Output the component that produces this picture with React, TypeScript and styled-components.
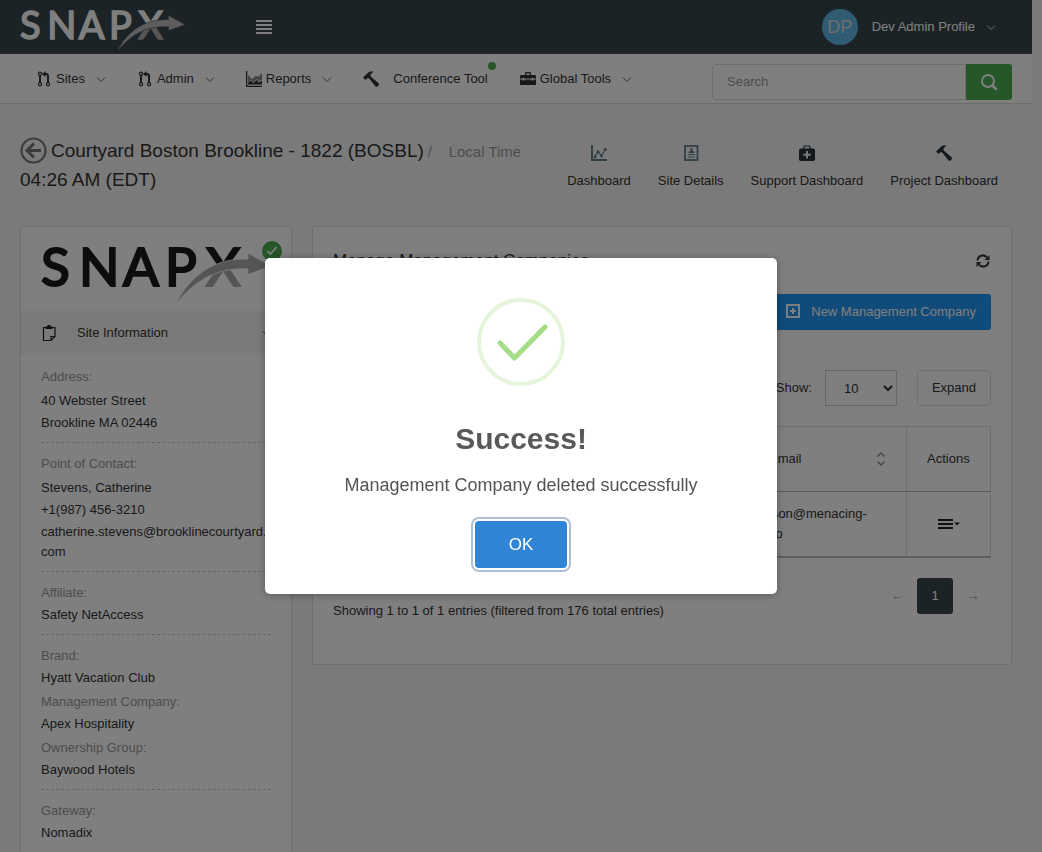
import React, { useId } from 'react';
import styled, { createGlobalStyle } from 'styled-components';

const GlobalStyle = createGlobalStyle`
  * { box-sizing: border-box; }
  body {
    margin: 0;
    overflow: hidden;
    background: #f5f5f5;
    color: #333;
    font: 13px/20px "Liberation Sans", Arial, sans-serif;
  }
  button, input, select { font: inherit; color: inherit; }
  a { color: inherit; text-decoration: none; }
  svg { display: block; flex: none; overflow: visible; }
`;

const Page = styled.div`
  height: 100vh;
  overflow: hidden;
  padding-right: 10px;
`;

const TopBar = styled.header`
  display: flex;
  align-items: center;
  height: 54px;
  padding: 0 33px 0 20px;
  background: #37474f;
  border-bottom: 1px solid #42535b;
  color: #fff;
`;

const Brand = styled.a`
  display: block;
  width: 165px;
  margin-top: 10px;
`;

const PlainButton = styled.button`
  display: flex;
  align-items: center;
  padding: 0;
  border: 0;
  background: none;
  cursor: pointer;
`;

const MenuToggle = styled(PlainButton)`
  margin-left: 71px;
`;

const Profile = styled(PlainButton)`
  gap: 8px;
  margin-left: auto;
`;

const Avatar = styled.span`
  width: 36px;
  height: 36px;
  margin-right: 6px;
  border-radius: 50%;
  background: #5eb8e4;
  color: #ddd;
  font-size: 18px;
  line-height: 37px;
  text-align: center;
`;

const NavBar = styled.nav`
  display: flex;
  align-items: center;
  height: 50px;
  padding: 0 20px 0 36px;
  background: #fff;
  border-bottom: 1px solid #ddd;
`;

const NavList = styled.ul`
  display: flex;
  gap: 28px;
  margin: 0;
  padding: 0;
  list-style: none;
`;

const NavLink = styled.a<{ $wide?: boolean }>`
  position: relative;
  display: flex;
  align-items: center;
  gap: ${p => (p.$wide ? 14 : 4)}px;
  padding-right: ${p => (p.$wide ? 4 : 0)}px;
  > span + svg { margin-left: 4px; }
`;

const StatusDot = styled.i`
  position: absolute;
  top: -7px;
  right: -4px;
  width: 8px;
  height: 8px;
  border-radius: 50%;
  background: #4caf50;
`;

const SearchForm = styled.form`
  display: flex;
  width: 300px;
  height: 36px;
  margin: 7px 0 0 auto;
`;

const SearchInput = styled.input`
  flex: 1;
  min-width: 0;
  padding: 0 14px;
  border: 1px solid #ddd;
  border-radius: 3px 0 0 3px;
  background: #fff;
  &::placeholder { color: #999; }
`;

const SearchButton = styled.button`
  display: grid;
  place-items: center;
  width: 46px;
  padding: 0;
  border: 0;
  border-radius: 0 3px 3px 0;
  background: #4caf50;
`;

const PageHeader = styled.div`
  display: flex;
  align-items: flex-start;
  gap: 28px;
  padding: 32px 34px 32px 20px;
`;

const Title = styled.h1`
  flex: 1;
  margin: 0;
  font-size: 19px;
  font-weight: 400;
  line-height: 29px;
  a { display: inline-block; margin-right: 4px; vertical-align: -7px; }
  small { margin: 0 4px; color: #999; font-size: 15px; line-height: 20px; white-space: pre; }
`;

const QuickLinks = styled.div`
  display: flex;
  gap: 27px;
  padding-top: 9px;
`;

const QuickLink = styled.a`
  display: flex;
  flex-direction: column;
  align-items: center;
  gap: 10px;
`;

const Content = styled.main`
  display: flex;
  align-items: flex-start;
  gap: 20px;
  padding: 0 20px;
`;

const Card = styled.section`
  border: 1px solid #ddd;
  border-radius: 3px;
  background: #fff;
`;

const SideCard = styled(Card)`
  flex: none;
  width: 272px;
`;

const SideLogo = styled.div`
  position: relative;
  height: 84px;
  padding: 20px;
`;

const Verified = styled.span`
  position: absolute;
  top: 14px;
  right: 9px;
  display: grid;
  place-items: center;
  width: 20px;
  height: 20px;
  border-radius: 50%;
  background: #4caf50;
`;

const SideToggle = styled(PlainButton)`
  width: 100%;
  height: 44px;
  padding: 0 16px 0 20px;
  background: #f5f5f5;
  > span { flex: 1; margin-left: 20px; text-align: left; }
`;

const Details = styled.div`
  padding: 1px 20px 80px;
`;

const Group = styled.dl<{ $labelGap?: number }>`
  margin: 0;
  padding: 11px 0 9px;
  border-bottom: 1px dashed #ccc;
  dt { margin-bottom: ${p => p.$labelGap ?? 2}px; color: #999; }
  dd { margin: 0; overflow-wrap: anywhere; }
  dd + dd { margin-top: 2px; }
  dd + dt { margin-top: 4px; }
  &:last-child { border-bottom: 0; }
`;

const MainCard = styled(Card)`
  flex: 1;
  min-width: 0;
  padding: 20px 20px 43px;
`;

const CardHead = styled.div`
  display: flex;
  align-items: center;
  justify-content: space-between;
  height: 27px;
  h2 { margin: 0; font-size: 17px; font-weight: 400; }
  button { margin-right: 1px; }
`;

const Right = styled.div<{ $top: number }>`
  display: flex;
  align-items: center;
  justify-content: flex-end;
  margin-top: ${p => p.$top}px;
`;

const NewButton = styled.button`
  display: flex;
  align-items: center;
  gap: 10px;
  height: 36px;
  padding: 0 15px;
  border: 0;
  border-radius: 3px;
  background: #2196f3;
  color: #fff;
`;

const SizeSelect = styled.select`
  width: 72px;
  height: 36px;
  margin: 0 20px 0 13px;
  padding: 0 0 0 14px;
  border: 1px solid #ccc;
  border-radius: 0;
  background: #fff;
`;

const ExpandButton = styled.button`
  height: 36px;
  padding: 0 14px;
  border: 1px solid #ddd;
  border-radius: 3px;
  background: #fcfcfc;
`;

const Table = styled.table`
  width: 100%;
  margin-top: 20px;
  border-collapse: collapse;
  border-bottom: 2px solid #bbb;
  th, td {
    height: 65px;
    padding: 0 20px;
    border: 1px solid #ddd;
    font-weight: 400;
    text-align: left;
  }
  th { border-bottom-color: #bbb; }
  th:nth-child(2) { width: 158px; }
  th:last-child { width: 84px; }
  td button { margin: 0 auto; }
`;

const SortHead = styled.span`
  display: flex;
  align-items: center;
  justify-content: space-between;
`;

const Footer = styled.div`
  display: flex;
  justify-content: space-between;
  margin-top: 20px;
  p { margin: 23px 0 0; }
`;

const Pager = styled.div`
  display: flex;
  gap: 2px;
`;

const PageButton = styled.button<{ $active?: boolean }>`
  width: 36px;
  height: 36px;
  padding: 0;
  border: 0;
  border-radius: 3px;
  background: ${p => (p.$active ? '#37474f' : 'none')};
  color: ${p => (p.$active ? '#fff' : '#999')};
`;

const Overlay = styled.div`
  position: fixed;
  inset: 0;
  display: grid;
  place-items: center;
  background: rgba(0, 0, 0, 0.5);
`;

const Dialog = styled.div`
  display: flex;
  flex-direction: column;
  align-items: center;
  width: 512px;
  padding: 40px 20px 26px;
  border-radius: 5px;
  background: #fff;
  box-shadow: 0 1px 8px rgba(0, 0, 0, 0.3);
  color: #545454;
  h2 { margin: 35px 0 0; font-size: 30px; line-height: 36px; color: #595959; }
  p { margin: 16px 0 0; font-size: 18px; line-height: 24px; }
`;

const OkButton = styled.button`
  width: 92px;
  height: 47px;
  margin-top: 24px;
  border: 0;
  border-radius: 4px;
  background: #3085d6;
  box-shadow: 0 0 0 2px #fff, 0 0 0 4px rgba(50, 100, 150, 0.4);
  color: #fff;
  font-size: 17px;
`;

const Logo = ({ light = false }: { light?: boolean }) => {
  const id = useId();
  const ink = light ? '#fff' : '#1a1a1a';
  return (
    <svg viewBox="0 0 230 57" width="100%" role="img" aria-label="SNAPX">
      <defs>
        <linearGradient id={id} gradientUnits="userSpaceOnUse" x1="0" y1="0" x2="0" y2="40">
          <stop offset="0.5" stopColor={ink} />
          <stop offset="0.5" stopColor="#aaa" />
        </linearGradient>
      </defs>
      <g fontFamily="Lato, sans-serif" fontSize="53" fill={ink} stroke={ink} strokeWidth="2.2">
        <text x="0" y="38.500">S</text>
        <text x="38" y="38.500">N</text>
        <text x="82" y="38.500">A</text>
        <text x="124" y="38.500">P</text>
        <text x="165" y="38.500" fill={`url(#${id})`} stroke={`url(#${id})`}>X</text>
      </g>
      <path
        d="M135 57C150 27 174 11 207 12V6L230 19 207 27.500V22C176 20 153 34 135 57Z"
        fill={light ? '#bbb' : '#aaa'}
        stroke={light ? '#37474f' : '#fff'}
        strokeWidth="0.8"
      />
    </svg>
  );
};

const Chevron = ({ color = '#666' }: { color?: string }) => (
  <svg width="16" height="16" viewBox="0 0 16 16" fill="none" stroke={color}>
    <path d="M4 6.500l4 4 4-4" />
  </svg>
);

const PullIcon = () => (
  <svg width="16" height="16" viewBox="0 0 16 16" fill="none" stroke="#333" strokeWidth="1.200">
    <circle cx="4" cy="2.800" r="1.600" /><circle cx="4" cy="13.200" r="1.600" /><circle cx="12" cy="13.200" r="1.600" />
    <path d="M4 4.500V11.500" strokeWidth="2" />
    <path d="M8.500 3H10Q12 3 12 5V11.500" strokeWidth="2" />
    <path d="M6 3L9.500 0V6z" fill="#333" stroke="none" />
  </svg>
);

const ReportIcon = () => (
  <svg width="16" height="16" viewBox="0 0 16 16">
    <path d="M0 0h1.300v14.700H16V16H0z" fill="#333" />
    <path d="M2 4l4 4 4-3.500L12 6l4-4v7l-3 1-2-2-3 3-3-2-3 3z" fill="#888" />
    <path d="M2 13.500V12l3-2.500L7.500 12 11 9l2 2.500 3-2v4z" fill="#333" />
  </svg>
);

const HammerIcon = ({ color = '#333' }: { color?: string }) => (
  <svg width="16" height="16" viewBox="0 0 16 16" fill={color}>
    <path d="M0 6.500L5.500 1.200Q6.500.3 8 .4L10.500.6 7.700 3.200 7.500 5.200 9.200 6.700 15.600 12.200Q16.500 13.200 15.600 14.400L14.500 15.500Q13.300 16.300 12.300 15.300L7 8.500 5.500 7 4.300 7.300 2.500 9z" />
  </svg>
);

const CaseIcon = () => (
  <svg width="16" height="16" viewBox="0 0 16 16">
    <path d="M5 4V2q0-1 1-1h4q1 0 1 1v2h-1.300V2.300H6.300V4z" fill="#333" />
    <path d="M1 4h14q1 0 1 1v2.500h-2.500V7h-2v.5h-7V7h-2v.5H0V5q0-1 1-1zM0 8.500h2.500v1h2v-1h7v1h2v-1H16V14H0z" fill="#333" />
  </svg>
);

const ChartIcon = () => (
  <svg width="16" height="16" viewBox="0 0 16 16" fill="none" stroke="#607d8b">
    <path d="M1 0v15h15" strokeWidth="2" />
    <path d="M4 12l3-6 3.500 5L14.500 4" strokeWidth="1.200" />
    <g fill="#607d8b" stroke="none"><circle cx="4" cy="12" r="1.400" /><circle cx="7" cy="7" r="1.400" /><circle cx="10.500" cy="11" r="1.400" /><circle cx="14.300" cy="4.500" r="1.400" /></g>
  </svg>
);

const ProfileIcon = () => (
  <svg width="16" height="16" viewBox="0 0 16 16" fill="none" stroke="#607d8b">
    <rect x="2" y="1" width="12.500" height="14" strokeWidth="1.800" />
    <path d="M5 9.500h7M5 12h7" strokeWidth="1.100" />
    <path d="M5.500 8q0-1.800 2-2V3h2v3q2 .2 2 2z" fill="#607d8b" stroke="none" />
  </svg>
);

const AidIcon = () => (
  <svg width="16" height="16" viewBox="0 0 16 16">
    <path d="M5 4V1.800Q5 1 6 1h4q1 0 1 .8V4" fill="none" stroke="#263238" strokeWidth="1.200" />
    <rect y="3.500" width="16" height="12.500" rx="1.800" fill="#263238" />
    <path d="M8 6v7.500M4.200 9.800h7.600" stroke="#f5f5f5" strokeWidth="2" />
  </svg>
);

const details: { gap?: number; rows: [string, string[]][] }[] = [
  { gap: 4, rows: [['Address:', ['40 Webster Street', 'Brookline MA 02446']]] },
  { gap: 4, rows: [['Point of Contact:', ['Stevens, Catherine', '+1(987) 456-3210', 'catherine.stevens@brooklinecourtyard.com']]] },
  { rows: [['Affiliate:', ['Safety NetAccess']]] },
  { rows: [['Brand:', ['Hyatt Vacation Club']], ['Management Company:', ['Apex Hospitality']], ['Ownership Group:', ['Baywood Hotels']]] },
  { rows: [['Gateway:', ['Nomadix']]] },
];

export default function App() {
  return (
    <>
      <GlobalStyle />
      <Page>
        <TopBar>
          <Brand href="#"><Logo light /></Brand>
          <MenuToggle aria-label="Toggle menu">
            <svg width="16" height="16" viewBox="0 0 16 16" stroke="#fff" strokeWidth="2">
              <path d="M0 2h16M0 6h16M0 10h16M0 14h16" />
            </svg>
          </MenuToggle>
          <Profile>
            <Avatar>DP</Avatar>
            <span>Dev Admin Profile</span>
            <Chevron color="#ddd" />
          </Profile>
        </TopBar>
        <NavBar>
          <NavList>
            <li><NavLink href="#"><PullIcon /><span>Sites</span><Chevron /></NavLink></li>
            <li><NavLink href="#"><PullIcon /><span>Admin</span><Chevron /></NavLink></li>
            <li><NavLink href="#"><ReportIcon /><span>Reports</span><Chevron /></NavLink></li>
            <li><NavLink href="#" $wide><HammerIcon /><span>Conference Tool</span><StatusDot /></NavLink></li>
            <li><NavLink href="#"><CaseIcon /><span>Global Tools</span><Chevron /></NavLink></li>
          </NavList>
          <SearchForm>
            <SearchInput aria-label="Search" placeholder="Search" />
            <SearchButton type="button" aria-label="Submit search">
              <svg width="16" height="16" viewBox="0 0 16 16" fill="none" stroke="#fff">
                <circle cx="7" cy="7" r="6" strokeWidth="2" />
                <path d="M11.500 11.500l3.500 3.500" strokeWidth="2.800" strokeLinecap="round" />
              </svg>
            </SearchButton>
          </SearchForm>
        </NavBar>
        <PageHeader>
          <Title>
            <a href="#" aria-label="Back">
              <svg width="27" height="27" viewBox="0 0 27 27" fill="none" stroke="#777">
                <circle cx="13.500" cy="13.500" r="12" strokeWidth="2.200" />
                <path d="M14 6.500l-7 7 7 7M7.500 13.500H21" strokeWidth="3" />
              </svg>
            </a>
            Courtyard Boston Brookline - 1822 (BOSBL)
            <small>/{'    '}Local Time</small> 04:26 AM (EDT)
          </Title>
          <QuickLinks>
            <QuickLink href="#"><ChartIcon />Dashboard</QuickLink>
            <QuickLink href="#"><ProfileIcon />Site Details</QuickLink>
            <QuickLink href="#"><AidIcon />Support Dashboard</QuickLink>
            <QuickLink href="#"><HammerIcon color="#263238" />Project Dashboard</QuickLink>
          </QuickLinks>
        </PageHeader>
        <Content>
          <SideCard>
            <SideLogo>
              <Verified>
                <svg width="12" height="12" viewBox="0 0 12 12" fill="none" stroke="#fff" strokeWidth="1.800">
                  <path d="M1.500 6l3 3.200L10.500 2" />
                </svg>
              </Verified>
              <Logo />
            </SideLogo>
            <SideToggle aria-expanded="true">
              <svg width="16" height="16" viewBox="0 0 16 16" fill="none" stroke="#222">
                <path d="M5 2.500H2.500v13h7.500l4-4V2.500H11M10 15.500V11.500h4" strokeWidth="1.200" />
                <path d="M4.500 1.500h2V0h3v1.500h2v2.500h-7z" fill="#222" stroke="none" />
              </svg>
              <span>Site Information</span>
              <Chevron color="#333" />
            </SideToggle>
            <Details>
              {details.map(group => (
                <Group key={group.rows[0][0]} $labelGap={group.gap}>
                  {group.rows.map(([label, values]) => (
                    <React.Fragment key={label}>
                      <dt>{label}</dt>
                      {values.map(value => <dd key={value}>{value}</dd>)}
                    </React.Fragment>
                  ))}
                </Group>
              ))}
            </Details>
          </SideCard>
          <MainCard>
            <CardHead>
              <h2>Manage Management Companies</h2>
              <PlainButton aria-label="Refresh">
                <svg width="14" height="14" viewBox="0 0 14 14" fill="none" stroke="#333" strokeWidth="2">
                  <path d="M1.500 6.500A5.300 5.300 0 0 1 11 3.500M12.500 7.500A5.300 5.300 0 0 1 3 10.500" />
                  <path d="M13.500 1v5H8.500zM.5 13V8h5z" fill="#333" stroke="none" />
                </svg>
              </PlainButton>
            </CardHead>
            <Right $top={20}>
              <NewButton>
                <svg width="16" height="16" viewBox="0 0 16 16" fill="none" stroke="#fff" strokeWidth="2">
                  <path d="M2 1h12v12H2zM8 4v6M5 7h6" />
                </svg>
                New Management Company
              </NewButton>
            </Right>
            <Right $top={40}>
              <label htmlFor="page-size">Show:</label>
              <SizeSelect id="page-size" defaultValue="10">
                <option>10</option>
                <option>25</option>
                <option>50</option>
              </SizeSelect>
              <ExpandButton>Expand</ExpandButton>
            </Right>
            <Table>
              <thead>
                <tr>
                  <th>Name</th>
                  <th>
                    <SortHead>
                      Email
                      <svg width="10" height="14" viewBox="0 0 10 14" fill="none" stroke="#888" strokeWidth="1.300">
                        <path d="M1.500 4.500L5 1l3.500 3.500M1.500 9.500L5 13l3.500-3.500" />
                      </svg>
                    </SortHead>
                  </th>
                  <th>Actions</th>
                </tr>
              </thead>
              <tbody>
                <tr>
                  <td>Menacing</td>
                  <td>ison@menacing-<br />.io</td>
                  <td>
                    <PlainButton aria-label="Row actions">
                      <svg width="22" height="12" viewBox="0 0 22 12" fill="#222">
                        <path d="M0 1h15v2H0zM0 5h15v2H0zM0 9h15v2H0zM16 4.500h6l-3 3z" />
                      </svg>
                    </PlainButton>
                  </td>
                </tr>
              </tbody>
            </Table>
            <Footer>
              <p>Showing 1 to 1 of 1 entries (filtered from 176 total entries)</p>
              <Pager>
                <PageButton aria-label="Previous">←</PageButton>
                <PageButton $active>1</PageButton>
                <PageButton aria-label="Next">→</PageButton>
              </Pager>
            </Footer>
          </MainCard>
        </Content>
      </Page>
      <Overlay>
        <Dialog role="dialog" aria-modal="true" aria-labelledby="dialog-title">
          <svg width="88" height="88" viewBox="0 0 88 88" fill="none">
            <circle cx="44" cy="44" r="42" stroke="#e4f5db" strokeWidth="4" />
            <path d="M23 45l14.500 15L68 29" stroke="#a5dc86" strokeWidth="5" strokeLinecap="round" strokeLinejoin="round" />
          </svg>
          <h2 id="dialog-title">Success!</h2>
          <p>Management Company deleted successfully</p>
          <OkButton>OK</OkButton>
        </Dialog>
      </Overlay>
    </>
  );
}
